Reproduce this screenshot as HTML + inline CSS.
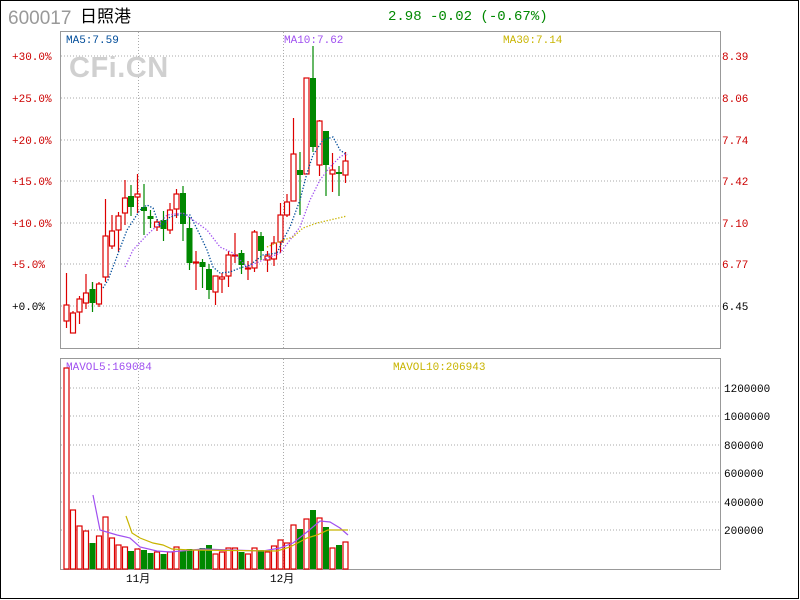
<!DOCTYPE html>
<html><head><meta charset="utf-8"><style>
html,body{margin:0;padding:0;background:#fff;}
svg{display:block;}
text{font-family:"Liberation Mono","DejaVu Sans Mono",monospace;}
</style></head><body>
<svg width="800" height="600" viewBox="0 0 800 600" xmlns="http://www.w3.org/2000/svg">
<rect x="0.5" y="0.5" width="798" height="598" fill="#fff" stroke="#000"/>
<text x="8" y="24" font-size="19" fill="#999" style="font-family:'Liberation Sans',sans-serif">600017</text>
<text x="80" y="22" font-size="17" fill="#000" style="font-family:'Liberation Sans','Noto Sans CJK SC',sans-serif">日照港</text>
<text x="388" y="20" font-size="14" fill="#080">2.98 -0.02 (-0.67%)</text>

<rect x="60.5" y="31.5" width="660" height="317" fill="none" stroke="#999"/>
<g stroke="#aaa" stroke-dasharray="1,2">
<line x1="61" y1="56" x2="720" y2="56"/><line x1="61" y1="98" x2="720" y2="98"/>
<line x1="61" y1="140" x2="720" y2="140"/><line x1="61" y1="181" x2="720" y2="181"/>
<line x1="61" y1="223" x2="720" y2="223"/><line x1="61" y1="264" x2="720" y2="264"/>
<line x1="61" y1="306" x2="720" y2="306"/>
<line x1="138.5" y1="32" x2="138.5" y2="348"/><line x1="283.5" y1="32" x2="283.5" y2="348"/>
<line x1="61" y1="388" x2="720" y2="388"/><line x1="61" y1="416" x2="720" y2="416"/>
<line x1="61" y1="445" x2="720" y2="445"/><line x1="61" y1="473" x2="720" y2="473"/>
<line x1="61" y1="502" x2="720" y2="502"/><line x1="61" y1="530" x2="720" y2="530"/>
<line x1="138.5" y1="359" x2="138.5" y2="569"/><line x1="283.5" y1="359" x2="283.5" y2="569"/>
</g>
<text x="69" y="77" font-size="29" fill="#d0d0d0" style="font-family:'Liberation Sans',sans-serif;font-weight:bold;letter-spacing:0.5px">CFi.CN</text>
<g font-size="11" fill="#c00">
<text x="12" y="60">+30.0%</text><text x="12" y="102">+25.0%</text><text x="12" y="144">+20.0%</text>
<text x="12" y="185">+15.0%</text><text x="12" y="227">+10.0%</text><text x="12" y="268">+5.0%</text>
<text x="12" y="310" fill="#000">+0.0%</text>
<text x="722" y="60">8.39</text><text x="722" y="102">8.06</text><text x="722" y="144">7.74</text>
<text x="722" y="185">7.42</text><text x="722" y="227">7.10</text><text x="722" y="268">6.77</text>
<text x="722" y="310" fill="#000">6.45</text>
</g>
<text x="66" y="43" font-size="11" fill="#004c99">MA5:7.59</text>
<text x="284" y="43" font-size="11" fill="#a050f0">MA10:7.62</text>
<text x="503" y="43" font-size="11" fill="#c8b400">MA30:7.14</text>

<g stroke-width="1.2" fill="none">
<g stroke="#d00">
<line x1="66.5" y1="273" x2="66.5" y2="328"/><line x1="73" y1="311" x2="73" y2="333"/>
<line x1="79.5" y1="296" x2="79.5" y2="324"/><line x1="86" y1="274" x2="86" y2="309"/>
<line x1="92.5" y1="282" x2="92.5" y2="305"/><line x1="99" y1="282" x2="99" y2="307"/>
<line x1="105.5" y1="199" x2="105.5" y2="282"/><line x1="112" y1="215" x2="112" y2="249"/>
<line x1="118.5" y1="212" x2="118.5" y2="252"/><line x1="125" y1="180" x2="125" y2="225"/>
<line x1="137.5" y1="174" x2="137.5" y2="213"/><line x1="157" y1="219" x2="157" y2="231"/>
<line x1="170" y1="203" x2="170" y2="234"/><line x1="176.5" y1="189" x2="176.5" y2="218"/>
<line x1="196" y1="251" x2="196" y2="290"/><line x1="215.5" y1="276" x2="215.5" y2="305"/>
<line x1="222" y1="273" x2="222" y2="293"/><line x1="228.5" y1="251" x2="228.5" y2="287"/>
<line x1="235" y1="233" x2="235" y2="263"/><line x1="248" y1="261" x2="248" y2="280"/>
<line x1="254.5" y1="230" x2="254.5" y2="272"/><line x1="267.5" y1="251" x2="267.5" y2="272"/>
<line x1="274" y1="236" x2="274" y2="266"/><line x1="280.5" y1="203" x2="280.5" y2="253"/>
<line x1="287" y1="194" x2="287" y2="217"/><line x1="293.5" y1="118" x2="293.5" y2="201"/>
<line x1="319.5" y1="120" x2="319.5" y2="176"/><line x1="332.5" y1="153" x2="332.5" y2="192"/>
<line x1="345.5" y1="152" x2="345.5" y2="183"/>
</g>
<g stroke="#080">
<line x1="92.5" y1="282" x2="92.5" y2="312"/><line x1="131" y1="185" x2="131" y2="216"/>
<line x1="144" y1="184" x2="144" y2="235"/><line x1="150.5" y1="210" x2="150.5" y2="228"/>
<line x1="163.5" y1="211" x2="163.5" y2="241"/><line x1="183" y1="186" x2="183" y2="241"/>
<line x1="189.5" y1="217" x2="189.5" y2="270"/><line x1="202.5" y1="259" x2="202.5" y2="288"/>
<line x1="209" y1="264" x2="209" y2="299"/><line x1="241.5" y1="250" x2="241.5" y2="274"/>
<line x1="261" y1="232" x2="261" y2="260"/><line x1="300" y1="152" x2="300" y2="215"/>
<line x1="313" y1="46" x2="313" y2="152"/><line x1="326" y1="131" x2="326" y2="196"/>
<line x1="339" y1="166" x2="339" y2="196"/>
</g>
</g>
<g fill="#fff" stroke="#d00" stroke-width="1.2">
<rect x="64" y="305" width="5" height="16"/><rect x="70.5" y="313" width="5" height="20"/>
<rect x="77" y="299" width="5" height="13"/><rect x="83.5" y="293" width="5" height="10"/>
<rect x="96.5" y="284" width="5" height="20"/><rect x="103" y="236" width="5" height="41"/>
<rect x="109.5" y="231" width="5" height="15"/><rect x="116" y="216" width="5" height="14"/>
<rect x="122.5" y="198" width="5" height="15"/><rect x="135" y="194" width="5" height="3"/>
<rect x="154.5" y="222" width="5" height="5"/><rect x="167.5" y="210" width="5" height="20"/>
<rect x="174" y="194" width="5" height="15"/><rect x="193.5" y="262" width="5" height="1"/>
<rect x="213" y="276" width="5" height="16"/><rect x="219.5" y="277" width="5" height="2"/>
<rect x="226" y="255" width="5" height="21"/><rect x="232.5" y="255" width="5" height="1"/>
<rect x="245.5" y="268" width="5" height="1"/><rect x="252" y="232" width="5" height="36"/>
<rect x="265" y="256" width="5" height="4"/><rect x="271.5" y="243" width="5" height="16"/>
<rect x="278" y="215" width="5" height="27"/><rect x="284.5" y="202" width="5" height="13"/>
<rect x="291" y="154" width="5" height="47"/><rect x="304" y="78" width="5" height="96"/>
<rect x="317" y="121" width="5" height="44"/><rect x="330" y="170" width="5" height="4"/>
<rect x="343" y="161" width="5" height="14"/>
</g>
<g fill="#080">
<rect x="89.5" y="289" width="6" height="14"/><rect x="128" y="196" width="6" height="11"/>
<rect x="141" y="207" width="6" height="4"/><rect x="147.5" y="216" width="6" height="3"/>
<rect x="160.5" y="220" width="6" height="9"/><rect x="180" y="193" width="6" height="31"/>
<rect x="186.5" y="228" width="6" height="35"/><rect x="199.5" y="262" width="6" height="5"/>
<rect x="206" y="269" width="6" height="21"/><rect x="238.5" y="253" width="6" height="12"/>
<rect x="258" y="236" width="6" height="15"/><rect x="297" y="170" width="6" height="5"/>
<rect x="310" y="78" width="6" height="69"/><rect x="323" y="131" width="6" height="34"/>
<rect x="336" y="172" width="6" height="2"/>
</g>
<g fill="none" stroke-width="1.3" stroke-dasharray="1.3,1.7">
<polyline stroke="#004c99" points="103,288 108,280 127,230 140,210 147,205 153,208 160,227 170,217 177,215 190,215 200,235 207,250 213,267 220,273 230,272 240,268 250,265 263,255 277,253 283,240 290,227 300,200 307,173 313,155 323,140 333,137 340,150 347,155"/>
<polyline stroke="#a050f0" points="125,267 133,250 147,235 160,223 167,215 183,213 193,220 207,230 220,247 233,253 247,267 263,260 280,253 290,240 300,227 310,200 320,180 330,167 340,157 347,153"/>
<polyline stroke="#c8b400" points="267,247 283,240 293,237 303,228 317,223 330,220 347,216"/>
</g>

<rect x="60.5" y="358.5" width="660" height="211" fill="none" stroke="#999"/>
<g font-size="11" fill="#000">
<text x="724" y="392">1200000</text><text x="724" y="420">1000000</text><text x="724" y="449">800000</text>
<text x="724" y="477">600000</text><text x="724" y="506">400000</text><text x="724" y="534">200000</text>
<text x="126" y="582" style="font-family:'Liberation Mono','Noto Sans CJK SC',monospace">11月</text>
<text x="270" y="582" style="font-family:'Liberation Mono','Noto Sans CJK SC',monospace">12月</text>
</g>
<text x="66" y="370" font-size="11" fill="#a050f0">MAVOL5:169084</text>
<text x="393" y="370" font-size="11" fill="#c8b400">MAVOL10:206943</text>
<g fill="#fff" stroke="#d00" stroke-width="1.2">
<rect x="64" y="368" width="5" height="201"/><rect x="70.5" y="510" width="5" height="59"/>
<rect x="77" y="526" width="5" height="43"/><rect x="83.5" y="531" width="5" height="38"/>
<rect x="96.5" y="536" width="5" height="33"/><rect x="103" y="517" width="5" height="52"/>
<rect x="109.5" y="538" width="5" height="31"/><rect x="116" y="545" width="5" height="24"/>
<rect x="122.5" y="547" width="5" height="22"/><rect x="135" y="549" width="5" height="20"/>
<rect x="154.5" y="552" width="5" height="17"/><rect x="167.5" y="552" width="5" height="17"/>
<rect x="174" y="547" width="5" height="22"/><rect x="193.5" y="550" width="5" height="19"/>
<rect x="213" y="554" width="5" height="15"/><rect x="219.5" y="552" width="5" height="17"/>
<rect x="226" y="548" width="5" height="21"/><rect x="232.5" y="548" width="5" height="21"/>
<rect x="245.5" y="554" width="5" height="15"/><rect x="252" y="548" width="5" height="21"/>
<rect x="265" y="552" width="5" height="17"/><rect x="271.5" y="546" width="5" height="23"/>
<rect x="278" y="540" width="5" height="29"/><rect x="284.5" y="543" width="5" height="26"/>
<rect x="291" y="525" width="5" height="44"/><rect x="304" y="519" width="5" height="50"/>
<rect x="317" y="518" width="5" height="51"/><rect x="330" y="548" width="5" height="21"/>
<rect x="343" y="542" width="5" height="27"/>
</g>
<g fill="#080">
<rect x="89.5" y="543" width="6" height="26"/><rect x="128" y="551" width="6" height="18"/>
<rect x="141" y="550" width="6" height="19"/><rect x="147.5" y="553" width="6" height="16"/>
<rect x="160.5" y="554" width="6" height="15"/><rect x="180" y="551" width="6" height="18"/>
<rect x="186.5" y="549" width="6" height="20"/><rect x="199.5" y="548" width="6" height="21"/>
<rect x="206" y="545" width="6" height="24"/><rect x="238.5" y="552" width="6" height="17"/>
<rect x="258" y="550" width="6" height="19"/><rect x="297" y="529" width="6" height="40"/>
<rect x="310" y="510" width="6" height="59"/><rect x="323" y="527" width="6" height="42"/>
<rect x="336" y="545" width="6" height="24"/>
</g>
<g fill="none" stroke-width="1.2">
<polyline stroke="#a050f0" points="93,495 100,530 117,535 130,538 140,547 157,551 170,552 203,549 230,550 263,551 280,548 293,543 307,532 320,521 330,522 340,528 348,535"/>
<polyline stroke="#c8b400" points="126,516 132,533 140,538 153,543 163,545 172,549 190,550 277,551 290,547 307,538 317,535 328,530 348,530"/>
</g>
</svg>
</body></html>
